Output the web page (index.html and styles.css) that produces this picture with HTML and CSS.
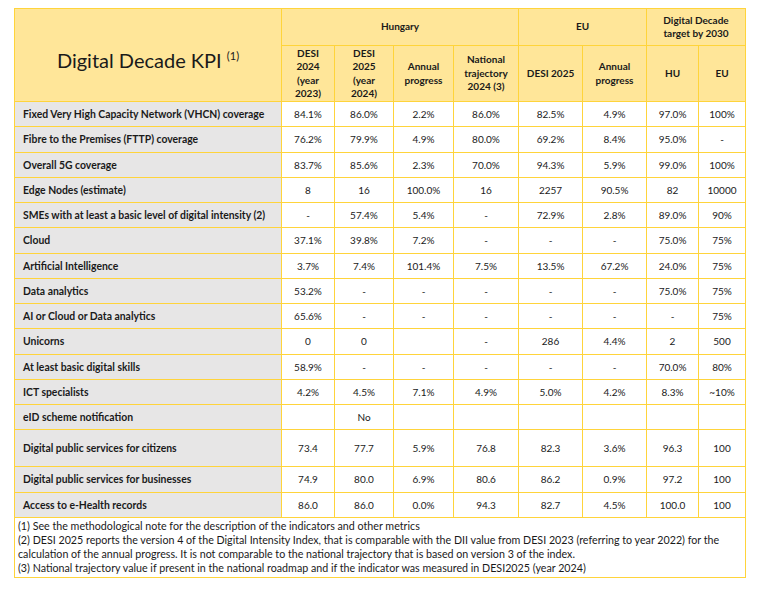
FILE: index.html
```html
<!DOCTYPE html>
<html>
<head>
<meta charset="utf-8">
<link rel="stylesheet" href="styles.css">
</head>
<body>
<table class="kpi">
  <colgroup>
    <col class="c-label">
    <col class="c1"><col class="c2"><col class="c3"><col class="c4">
    <col class="c5"><col class="c6"><col class="c7"><col class="c8">
  </colgroup>
  <thead>
    <tr class="h1">
      <th rowspan="2" class="title">Digital Decade KPI <sup>(1)</sup></th>
      <th colspan="4">Hungary</th>
      <th colspan="2">EU</th>
      <th colspan="2">Digital Decade<br>target by 2030</th>
    </tr>
    <tr class="h2">
      <th>DESI<br>2024<br>(year<br>2023)</th>
      <th>DESI<br>2025<br>(year<br>2024)</th>
      <th>Annual<br>progress</th>
      <th>National<br>trajectory<br>2024 (3)</th>
      <th>DESI 2025</th>
      <th>Annual<br>progress</th>
      <th>HU</th>
      <th>EU</th>
    </tr>
  </thead>
  <tbody>
    <tr><td class="lbl">Fixed Very High Capacity Network (VHCN) coverage</td><td>84.1%</td><td>86.0%</td><td>2.2%</td><td>86.0%</td><td>82.5%</td><td>4.9%</td><td>97.0%</td><td>100%</td></tr>
    <tr><td class="lbl">Fibre to the Premises (FTTP) coverage</td><td>76.2%</td><td>79.9%</td><td>4.9%</td><td>80.0%</td><td>69.2%</td><td>8.4%</td><td>95.0%</td><td>-</td></tr>
    <tr><td class="lbl">Overall 5G coverage</td><td>83.7%</td><td>85.6%</td><td>2.3%</td><td>70.0%</td><td>94.3%</td><td>5.9%</td><td>99.0%</td><td>100%</td></tr>
    <tr><td class="lbl">Edge Nodes (estimate)</td><td>8</td><td>16</td><td>100.0%</td><td>16</td><td>2257</td><td>90.5%</td><td>82</td><td>10000</td></tr>
    <tr><td class="lbl">SMEs with at least a basic level of digital intensity (2)</td><td>-</td><td>57.4%</td><td>5.4%</td><td>-</td><td>72.9%</td><td>2.8%</td><td>89.0%</td><td>90%</td></tr>
    <tr><td class="lbl">Cloud</td><td>37.1%</td><td>39.8%</td><td>7.2%</td><td>-</td><td>-</td><td>-</td><td>75.0%</td><td>75%</td></tr>
    <tr><td class="lbl">Artificial Intelligence</td><td>3.7%</td><td>7.4%</td><td>101.4%</td><td>7.5%</td><td>13.5%</td><td>67.2%</td><td>24.0%</td><td>75%</td></tr>
    <tr><td class="lbl">Data analytics</td><td>53.2%</td><td>-</td><td>-</td><td>-</td><td>-</td><td>-</td><td>75.0%</td><td>75%</td></tr>
    <tr><td class="lbl">AI or Cloud or Data analytics</td><td>65.6%</td><td>-</td><td>-</td><td>-</td><td>-</td><td>-</td><td>-</td><td>75%</td></tr>
    <tr><td class="lbl">Unicorns</td><td>0</td><td>0</td><td></td><td>-</td><td>286</td><td>4.4%</td><td>2</td><td>500</td></tr>
    <tr><td class="lbl">At least basic digital skills</td><td>58.9%</td><td>-</td><td>-</td><td>-</td><td>-</td><td>-</td><td>70.0%</td><td>80%</td></tr>
    <tr><td class="lbl">ICT specialists</td><td>4.2%</td><td>4.5%</td><td>7.1%</td><td>4.9%</td><td>5.0%</td><td>4.2%</td><td>8.3%</td><td>~10%</td></tr>
    <tr><td class="lbl">eID scheme notification</td><td></td><td>No</td><td></td><td></td><td></td><td></td><td></td><td></td></tr>
    <tr class="tall"><td class="lbl">Digital public services for citizens</td><td>73.4</td><td>77.7</td><td>5.9%</td><td>76.8</td><td>82.3</td><td>3.6%</td><td>96.3</td><td>100</td></tr>
    <tr><td class="lbl">Digital public services for businesses</td><td>74.9</td><td>80.0</td><td>6.9%</td><td>80.6</td><td>86.2</td><td>0.9%</td><td>97.2</td><td>100</td></tr>
    <tr><td class="lbl">Access to e-Health records</td><td>86.0</td><td>86.0</td><td>0.0%</td><td>94.3</td><td>82.7</td><td>4.5%</td><td>100.0</td><td>100</td></tr>
    <tr class="notes"><td colspan="9">
      (1) See the methodological note for the description of the indicators and other metrics<br>
      (2) DESI 2025 reports the version 4 of the Digital Intensity Index, that is comparable with the DII value from DESI 2023 (referring to year 2022) for the calculation of the annual progress. It is not comparable to the national trajectory that is based on version 3 of the index.<br>
      (3) National trajectory value if present in the national roadmap and if the indicator was measured in DESI2025 (year 2024)
    </td></tr>
  </tbody>
</table>
</body>
</html>
```

FILE: styles.css
```css
html, body {
  margin: 0;
  padding: 0;
  background: #ffffff;
}
body {
  padding: 8px 0 0 14px;
  font-family: Lato, "Open Sans", sans-serif;
  color: #1a1a1a;
}
.kpi {
  border-collapse: collapse;
  table-layout: fixed;
  width: 731px;
  font-size: 10px;
}
.c-label { width: 267px; }
.c1 { width: 53px; }
.c2 { width: 59px; }
.c3 { width: 60px; }
.c4 { width: 65px; }
.c5 { width: 64px; }
.c6 { width: 64px; }
.c7 { width: 52px; }
.c8 { width: 47px; }
.kpi th, .kpi td {
  border: 1px solid #ffd43b;
  padding: 0;
  text-align: center;
  vertical-align: middle;
}
.kpi th {
  background: #ffe699;
  font-weight: bold;
  font-size: 10px;
  line-height: 13.5px;
}
.h1 th { height: 36px; }
.h2 th { height: 55px; }
.kpi th.title {
  font-weight: normal;
  font-size: 20px;
  line-height: 24px;
  padding-top: 10px;
}
.title sup {
  font-size: 11px;
  vertical-align: 8px;
  line-height: 0;
}
.kpi tbody td {
  height: 24.25px;
  line-height: 12px;
}
.kpi td.lbl {
  background: #e7e6e6;
  font-weight: bold;
  font-size: 10.4px;
  text-align: left;
  padding-left: 8px;
}
.kpi tr.tall td { height: 36px; }
.kpi tr.notes td {
  text-align: left;
  font-size: 10.7px;
  line-height: 14px;
  padding: 1px 16px 2px 3px;
  height: auto;
  background: #ffffff;
}
```
